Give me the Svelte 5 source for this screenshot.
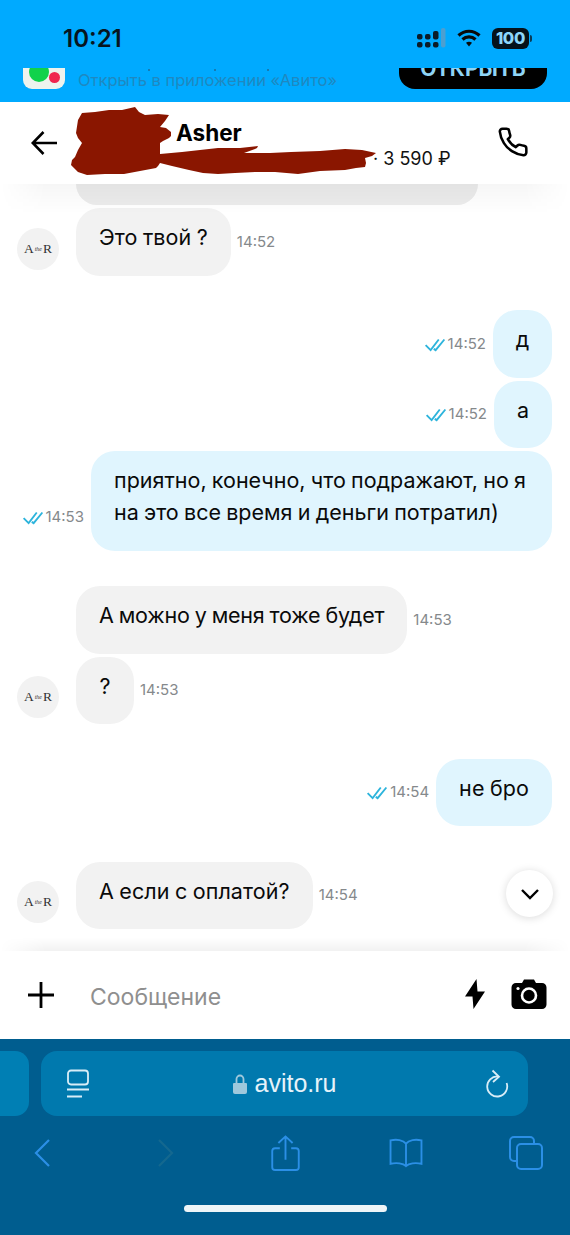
<script>
  const check = 'M1 6.5 5 10.5 11.5 2M7.5 9.5 9 10.5 16 2';
</script>

{#snippet avatar()}
  <div class="avatar"><span>A</span><i>the</i><span>R</span></div>
{/snippet}

{#snippet sent(time)}
  <svg class="check" width="22" height="15" viewBox="0 0 17 12" fill="none" stroke="#2db4dc" stroke-width="1.5"><path d={check} /></svg>
  <span class="time sent-time">{time}</span>
{/snippet}

<div class="page">
  <header class="status">
    <span class="clock">10:21</span>
    <div class="status-icons">
      <svg width="29" height="21" viewBox="0 0 29 21">
        <g fill="#0b1c28">
          <rect x="0" y="6" width="5.500" height="5.500" rx="2" /><rect x="8" y="6" width="5.500" height="5.500" rx="2" /><rect x="16" y="3" width="5.500" height="8.500" rx="2" />
          <rect x="0" y="14" width="5.500" height="5.500" rx="2" /><rect x="8" y="14" width="5.500" height="5.500" rx="2" /><rect x="16" y="14" width="5.500" height="5.500" rx="2" />
        </g>
        <rect x="24" y="0" width="4.500" height="19.500" rx="2" fill="#4d9fd0" />
      </svg>
      <svg width="24" height="19" viewBox="0 0 24 19" fill="none" stroke="#0a0a0a" stroke-width="3.2">
        <path d="M1.500 6.500C7.500 .8 16.500 .8 22.500 6.500M5.500 10.500c3.600-3.400 9.400-3.400 13 0" />
        <path d="M9 13.800c1.700-1.500 4.300-1.500 6 0L12 17.500z" fill="#0a0a0a" stroke="none" />
      </svg>
      <div class="battery-wrap">
        <div class="battery"><span>100</span></div>
        <div class="battery-cap"></div>
      </div>
    </div>
  </header>

  <div class="banner">
    <div class="logo"><b class="green"></b><b class="red"></b></div>
    <span class="banner-text">Открыть в приложении «Авито»</span>
    <div class="open-btn"><span>ОТКРЫТЬ</span></div>
    <div class="specks"></div>
  </div>

  <div class="chat-head">
    <svg class="back" width="28" height="28" viewBox="0 0 28 28" fill="none" stroke="#000" stroke-width="2.600">
      <path d="M27 14H3M13.500 3 2.800 14l10.700 11" />
    </svg>
    <div class="head-text">
      <div class="name">Asher</div>
      <div class="price">· 3 590 ₽</div>
    </div>
    <svg class="phone" width="32" height="32" viewBox="0 0 24 24" fill="none" stroke="#000" stroke-width="1.900" stroke-linejoin="round">
      <path d="M22 16.920v3a2 2 0 0 1-2.180 2 19.790 19.790 0 0 1-8.630-3.070 19.500 19.500 0 0 1-6-6 19.790 19.790 0 0 1-3.070-8.670A2 2 0 0 1 4.110 2h3a2 2 0 0 1 2 1.720 12.840 12.840 0 0 0 .7 2.810 2 2 0 0 1-.45 2.110L8.090 9.910a16 16 0 0 0 6 6l1.270-1.270a2 2 0 0 1 2.110-.45 12.840 12.840 0 0 0 2.810.7A2 2 0 0 1 22 16.920z" />
    </svg>
    <svg class="scribble" width="570" height="82" viewBox="0 102 570 82">
      <path fill="#8a1600" d="M78 120 82 113 95 112 109 110 122 110 135 107 139 112 145 115 158 114 169 115 165 121 160 127 166 128 171 132 171 136 169 138 163 141 160 143 160 154 182 152 200 150 218 148 240 148 258 146 257 148 255 149 244 153 270 153 291 152 320 151 345 149 362 150 376 153 372 156 365 158 366 163 365 167 356 168 345 170 320 171 298 174 275 172 255 172 235 173 218 174 203 173 189 170 172 166 160 163 158 166 156 168 140 171 124 174 105 174 87 175 78 172 71 165 72 160 75 157 78 150 82 143 78 138 76 133Z" />
    </svg>
  </div>

  <main class="messages">
    <div class="fade-top"></div>
    <div class="bubble in cut"></div>

    <div class="row gap-3">
      {@render avatar()}
      <div class="bubble in">Это твой ?</div>
      <span class="time">14:52</span>
    </div>

    <div class="row out gap-34">
      {@render sent('14:52')}
      <div class="bubble mine narrow wide-d">д</div>
    </div>
    <div class="row out gap-3">
      {@render sent('14:52')}
      <div class="bubble mine narrow">а</div>
    </div>
    <div class="row out gap-3">
      {@render sent('14:53')}
      <div class="bubble mine long">приятно, конечно, что подражают, но я<br />на это все время и деньги потратил)</div>
    </div>

    <div class="row gap-35 no-avatar">
      <div class="bubble in tight">А можно у меня тоже будет</div>
      <span class="time">14:53</span>
    </div>
    <div class="row gap-3">
      {@render avatar()}
      <div class="bubble in narrow">?</div>
      <span class="time">14:53</span>
    </div>

    <div class="row out gap-34">
      {@render sent('14:54')}
      <div class="bubble mine">не бро</div>
    </div>

    <div class="row gap-35">
      {@render avatar()}
      <div class="bubble in">А если с оплатой?</div>
      <span class="time">14:54</span>
    </div>

    <button class="scroll-down" aria-label="Вниз">
      <svg width="20" height="12" viewBox="0 0 20 12" fill="none" stroke="#000" stroke-width="2.400"><path d="M2 2l8 8 8-8" /></svg>
    </button>
    <div class="fade-bottom"></div>
  </main>

  <div class="composer">
    <svg class="plus" width="28" height="28" viewBox="0 0 28 28" stroke="#000" stroke-width="2.800"><path d="M14 1v26M1 14h26" /></svg>
    <span class="placeholder">Сообщение</span>
    <svg class="bolt" width="22" height="32" viewBox="0 0 22 32"><path fill="#000" d="M12.500 1 1 18.500h7.500L9.500 31 21 13.500h-7.500z" /></svg>
    <svg class="camera" width="36" height="30" viewBox="0 0 36 30">
      <path fill="#000" d="M5 4h6l2-3.500h10L25 4h6a4.500 4.500 0 0 1 4.500 4.500v17A4.500 4.500 0 0 1 31 30H5a4.500 4.500 0 0 1-4.500-4.500v-17A4.500 4.500 0 0 1 5 4z" />
      <circle cx="18" cy="16.500" r="7" fill="none" stroke="#fff" stroke-width="2.600" />
      <circle cx="7" cy="9.500" r="1.600" fill="#fff" />
    </svg>
  </div>

  <footer class="safari">
    <div class="tabs">
      <div class="tab-prev"></div>
      <div class="address">
        <svg width="24" height="30" viewBox="0 0 24 30" fill="none" stroke="#d8edf7" stroke-width="1.800">
          <rect x="2" y="1.500" width="20" height="14" rx="3" /><path d="M1 20.500h22M1 27.500h15" />
        </svg>
        <div class="url">
          <svg width="14" height="20" viewBox="0 0 14 20"><path fill="#9fc8dc" d="M1 9h12a1 1 0 0 1 1 1v8a2 2 0 0 1-2 2H2a2 2 0 0 1-2-2v-8a1 1 0 0 1 1-1z" /><path fill="none" stroke="#9fc8dc" stroke-width="1.800" d="M3.500 9V5a3.500 3.500 0 0 1 7 0v4" /></svg>
          <span>avito.ru</span>
        </div>
        <svg width="24" height="30" viewBox="0 0 24 30" fill="none" stroke="#d8edf7" stroke-width="1.800">
          <path d="M13 7.500A10 10 0 1 0 21.600 14" /><path d="M7.500 1.500 14 7.800 8 13" />
        </svg>
      </div>
    </div>
    <nav class="toolbar">
      <svg width="18" height="30" viewBox="0 0 18 30" fill="none" stroke="#2b8fe6" stroke-width="2.200"><path d="M16 2 3 15l13 13" /></svg>
      <svg width="18" height="30" viewBox="0 0 18 30" fill="none" stroke="#14688f" stroke-width="2.200"><path d="M2 2l13 13L2 28" /></svg>
      <svg width="29" height="36" viewBox="0 0 30 38" fill="none" stroke="#2b8fe6" stroke-width="2"><path d="M9 14H4a3 3 0 0 0-3 3v17a3 3 0 0 0 3 3h22a3 3 0 0 0 3-3V17a3 3 0 0 0-3-3h-5M15 26V2M7.500 8.500 15 1.500l7.500 7" /></svg>
      <svg width="36" height="30" viewBox="0 0 36 32" fill="none" stroke="#2b8fe6" stroke-width="2"><path d="M18 6C15 2 8 1 1.500 2.500v25C8 26 15 27 18 30c3-3 10-4 16.500-2.500v-25C28 1 21 2 18 6zM18 6v24" /></svg>
      <svg width="34" height="34" viewBox="0 0 34 34" fill="none" stroke="#2b8fe6" stroke-width="2"><path d="M7 25H5a4 4 0 0 1-4-4V5a4 4 0 0 1 4-4h16a4 4 0 0 1 4 4v3" /><rect x="8" y="8" width="25" height="25" rx="4" /></svg>
    </nav>
    <div class="home-bar"></div>
  </footer>
</div>

<style>
  :global(body) { background: #fff; }

  .page {
    width: 570px; height: 1235px;
    display: flex; flex-direction: column;
    overflow: hidden;
    font-family: Inter, "Noto Sans", sans-serif;
    color: #0a0a0a;
  }

  .status {
    height: 68px; flex: none;
    background: #00aaff;
    display: flex; align-items: center; justify-content: space-between;
    padding: 8px 38px 0 63px;
    box-sizing: border-box;
  }
  .clock { font-size: 24px; font-weight: 600; color: #07151f; }
  .status-icons { display: flex; align-items: center; gap: 11px; }
  .battery-wrap { display: flex; align-items: center; gap: 1px; }
  .battery {
    width: 37px; height: 21px;
    background: #05121b; border-radius: 6px;
    display: flex; align-items: center; justify-content: center;
  }
  .battery span { font-size: 16.500px; font-weight: 800; letter-spacing: -0.3px; color: #8dd6fa; }
  .battery-cap { width: 2px; height: 7px; background: #0a3b57; border-radius: 0 2px 2px 0; }

  .banner {
    position: relative;
    height: 34px; flex: none;
    background: #00aaff;
    display: flex; align-items: flex-start;
    padding: 0 23px;
    box-sizing: border-box;
  }
  .logo {
    position: relative;
    width: 42px; height: 21px;
    background: #eef3ee;
    border-radius: 0 0 9px 9px;
    overflow: hidden;
    flex: none;
  }
  .green { position: absolute; left: 6px; top: -6px; width: 20px; height: 20px; border-radius: 50%; background: #10d24b; }
  .red { position: absolute; left: 26px; top: 4px; width: 11px; height: 11px; border-radius: 50%; background: #f0264f; }
  .banner-text { margin: 2px 0 0 13px; font-size: 16.500px; line-height: 20px; color: #1f88c0; white-space: nowrap; }
  .open-btn {
    margin-left: auto;
    width: 148px; height: 21px;
    background: #000;
    border-radius: 0 0 16px 16px;
    overflow: hidden;
    text-align: center;
    flex: none;
  }
  .open-btn span {
    display: block; margin-top: -9px;
    font-size: 21px; line-height: 20px; font-weight: 700;
    color: #8fd4f5;
  }
  .specks {
    position: absolute; left: 148px; top: 1px;
    width: 2px; height: 2px; border-radius: 50%;
    background: #1a6d9c;
    box-shadow: 66px 0 #1a6d9c, 119px 0 #1a6d9c;
  }

  .chat-head {
    position: relative;
    height: 82px; flex: none;
    background: #fff;
    display: flex; align-items: center;
    padding: 0 41px 0 30px;
    box-sizing: border-box;
    z-index: 2;
  }
  .back { flex: none; }
  .head-text { flex: 1; padding-left: 118px; margin-top: 4px; }
  .name { font-size: 22.500px; line-height: 28px; font-weight: 700; color: #000; }
  .price { margin: 0 0 0 197px; font-size: 18px; line-height: 24px; color: #111; white-space: nowrap; }
  .phone { flex: none; margin-top: -2px; }
  .scribble { position: absolute; left: 0; top: 0; }

  .messages {
    position: relative;
    flex: 1; min-height: 0;
    overflow: hidden;
    background: #fff;
  }
  .fade-top {
    position: absolute; left: 0; right: 0; top: 0; height: 30px;
    background: linear-gradient(rgba(0,0,0,0.035), rgba(0,0,0,0));
    -webkit-mask-image: linear-gradient(90deg, transparent, #000 8%, #000 92%, transparent);
    mask-image: linear-gradient(90deg, transparent, #000 8%, #000 92%, transparent);
    z-index: 1;
  }
  .fade-bottom {
    position: absolute; left: 0; right: 0; bottom: 0; height: 14px;
    background: linear-gradient(rgba(0,0,0,0), rgba(0,0,0,0.05));
    -webkit-mask-image: linear-gradient(90deg, transparent, #000 8%, #000 92%, transparent);
    mask-image: linear-gradient(90deg, transparent, #000 8%, #000 92%, transparent);
  }

  .row {
    display: flex; align-items: flex-end;
    padding: 0 18px 0 17px;
  }
  .row.out { justify-content: flex-end; }
  .no-avatar { padding-left: 76px; }
  .gap-3 { margin-top: 3px; }
  .gap-34 { margin-top: 34.500px; }
  .gap-35 { margin-top: 35.500px; }

  .bubble {
    border-radius: 24px;
    padding: 13px 23px 22.500px;
    font-size: 21.500px; line-height: 32px;
    letter-spacing: 0.1px; word-spacing: -0.8px;
    white-space: nowrap;
    color: #0a0a0a;
  }
  .in { background: #f2f2f2; }
  .avatar + .in { margin-left: 17px; }
  .mine { background: #e0f5fe; }
  .tight { letter-spacing: -0.2px; }
  .narrow { width: 58px; padding-left: 0; padding-right: 0; text-align: center; }
  .wide-d { width: 59px; }
  .long { width: 461px; box-sizing: border-box; letter-spacing: 0; }
  .cut {
    width: 402px; height: 21px; padding: 0;
    margin-left: 76px;
    border-radius: 0 0 24px 24px;
    background: #ececec;
  }

  .avatar {
    width: 42px; height: 42px; flex: none;
    margin-bottom: 6px;
    border-radius: 50%;
    background: #f2f2f2;
    display: flex; align-items: center; justify-content: center;
    font-family: "Liberation Serif", serif;
    font-size: 13.500px; color: #333;
  }
  .avatar i { font-size: 6px; margin: 0 1px; }

  .time {
    margin: 0 0 25px 6px;
    font-size: 15px; line-height: 18px;
    color: #85898c;
  }
  .sent-time { margin: 0 7px 25px 2px; }
  .check { flex: none; margin-bottom: 26px; }

  .scroll-down {
    position: absolute; left: 506px; top: 686px;
    width: 47px; height: 47px;
    border: none; border-radius: 50%;
    background: #fff;
    box-shadow: 0 1px 8px rgba(0,0,0,0.15);
    display: flex; align-items: center; justify-content: center;
    padding: 0;
  }

  .composer {
    height: 88px; flex: none;
    background: #fff;
    display: flex; align-items: center;
    padding: 0 23px 0 27px;
    box-sizing: border-box;
  }
  .plus { flex: none; }
  .placeholder { margin: 3px 0 0 35px; flex: 1; font-size: 23px; color: #8f8f8f; }
  .bolt { margin-right: 25px; margin-top: -2px; }
  .camera { margin-top: -2px; }

  .safari {
    height: 196px; flex: none;
    background: #005d8f;
    display: flex; flex-direction: column;
  }
  .tabs { display: flex; gap: 12px; margin-top: 12px; height: 65px; }
  .tab-prev { width: 29px; background: #007fb4; border-radius: 0 14px 14px 0; }
  .address {
    width: 487px;
    background: #0079ae; border-radius: 16px;
    display: flex; align-items: center; justify-content: space-between;
    padding: 0 19px 0 25px;
    box-sizing: border-box;
  }
  .url { display: flex; align-items: center; gap: 8px; margin-left: -6px; }
  .url span { font-size: 25px; color: #e6f3fa; font-family: "Liberation Sans", sans-serif; }
  .toolbar {
    display: grid; align-items: center; justify-items: center;
    grid-template-columns: 84px 164px 74px 168px 72px;
    height: 38px;
    margin-top: 18px;
  }
  .home-bar {
    width: 203px; height: 7px;
    margin: 33px auto 0;
    background: #eef5f8; border-radius: 4px;
  }
</style>
